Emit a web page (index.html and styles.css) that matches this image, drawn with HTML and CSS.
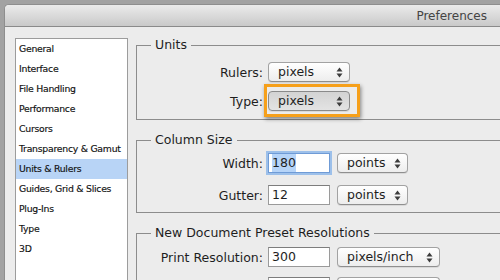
FILE: index.html
```html
<!DOCTYPE html>
<html lang="en">
<head>
    <meta charset="UTF-8">
    <title>Preferences</title>
    <link rel="stylesheet" href="styles.css">
</head>
<body>
    <div class="window">
        <!-- title bar -->
        <div class="titlebar">
            <span class="title">Preferences</span>
        </div>

        <div class="content">
            <!-- category list -->
            <ul class="nav">
                <li>General</li>
                <li>Interface</li>
                <li>File Handling</li>
                <li>Performance</li>
                <li>Cursors</li>
                <li>Transparency &amp; Gamut</li>
                <li class="active">Units &amp; Rulers</li>
                <li>Guides, Grid &amp; Slices</li>
                <li>Plug-Ins</li>
                <li>Type</li>
                <li>3D</li>
            </ul>

            <!-- settings -->
            <div class="panel">
                <fieldset class="group group-units">
                    <legend>Units</legend>
                    <div class="rows rows-units">
                        <label>Rulers:</label>
                        <span class="popup popup-units">pixels
                            <svg class="arrows" width="7" height="11" viewBox="0 0 7 11"><polygon points="0.5,4.5 3.5,0.5 6.5,4.5"/><polygon points="0.5,6.5 3.5,10.5 6.5,6.5"/></svg>
                        </span>
                        <label>Type:</label>
                        <span class="focus-frame">
                            <span class="popup popup-units pressed">pixels
                                <svg class="arrows" width="7" height="11" viewBox="0 0 7 11"><polygon points="0.5,4.5 3.5,0.5 6.5,4.5"/><polygon points="0.5,6.5 3.5,10.5 6.5,6.5"/></svg>
                            </span>
                        </span>
                    </div>
                </fieldset>

                <fieldset class="group group-column">
                    <legend>Column Size</legend>
                    <div class="rows">
                        <label>Width:</label>
                        <span class="field focused"><span class="selected">180</span></span>
                        <span class="popup popup-points">points
                            <svg class="arrows" width="7" height="11" viewBox="0 0 7 11"><polygon points="0.5,4.5 3.5,0.5 6.5,4.5"/><polygon points="0.5,6.5 3.5,10.5 6.5,6.5"/></svg>
                        </span>
                        <label>Gutter:</label>
                        <span class="field">12</span>
                        <span class="popup popup-points">points
                            <svg class="arrows" width="7" height="11" viewBox="0 0 7 11"><polygon points="0.5,4.5 3.5,0.5 6.5,4.5"/><polygon points="0.5,6.5 3.5,10.5 6.5,6.5"/></svg>
                        </span>
                    </div>
                </fieldset>

                <fieldset class="group group-preset">
                    <legend>New Document Preset Resolutions</legend>
                    <div class="rows rows-preset">
                        <label>Print Resolution:</label>
                        <span class="field">300</span>
                        <span class="popup popup-res">pixels/inch
                            <svg class="arrows" width="7" height="11" viewBox="0 0 7 11"><polygon points="0.5,4.5 3.5,0.5 6.5,4.5"/><polygon points="0.5,6.5 3.5,10.5 6.5,6.5"/></svg>
                        </span>
                        <!-- next row is only just visible at the bottom edge -->
                        <span></span>
                        <span class="field"></span>
                        <span class="popup popup-res"></span>
                    </div>
                </fieldset>
            </div>
        </div>
    </div>
</body>
</html>
```

FILE: styles.css
```css
* {
    margin: 0;
    padding: 0;
    box-sizing: border-box;
}

html, body {
    height: 280px;
    overflow: hidden;
}

body {
    font-family: 'DejaVu Sans', 'Liberation Sans', sans-serif;
    font-size: 12.5px;
    color: #1e1e1e;
    background: #a2a2a2;
    padding: 4px 0 0 4px;
}

/* window */
.window {
    height: 100%;
    background: #ececec;
    border-top: 1px solid #8e8e8e;
    border-left: 1px solid #8e8e8e;
    border-top-left-radius: 5px;
    overflow: hidden;
}

.titlebar {
    height: 22px;
    background: linear-gradient(#ebebeb, #c9c9c9);
    border-bottom: 1px solid #8a8a8a;
    display: flex;
    align-items: center;
    justify-content: flex-end;
    padding-right: 13px;
}

.title {
    font-size: 12px;
    color: #444;
}

.content {
    display: flex;
    align-items: flex-start;
    padding: 10px 0 0 10px;
}

/* category list */
.nav {
    list-style: none;
    width: 113px;
    height: 260px;
    margin-top: 1px;
    background: #fff;
    border: 1px solid #9c9c9c;
    flex-shrink: 0;
}

.nav li {
    height: 20px;
    line-height: 20px;
    padding-left: 3px;
    font-size: 9.3px;
    letter-spacing: -0.25px;
    color: #111;
    -webkit-text-stroke: 0.15px #111;
    white-space: nowrap;
}

.nav li.active {
    background: #b8d4f6;
}

/* settings panel */
.panel {
    width: 420px;
    margin-left: 8px;
    flex-shrink: 0;
}

.group {
    border: 1px solid #8c8c8c;
    border-right: none;
    padding: 0 0 8px;
}

.group + .group {
    margin-top: 12px;
}

.group legend {
    margin-left: 14px;
    padding: 0 4px;
    line-height: 16px;
}

.rows {
    display: grid;
    grid-template-columns: 126px max-content max-content;
    column-gap: 5px;
    row-gap: 12px;
    align-items: center;
}

.rows label {
    text-align: right;
    white-space: nowrap;
}

.group-units .rows {
    grid-template-columns: 126px max-content;
    padding-top: 9px;
    row-gap: 9px;
}

.group-column .rows {
    padding-top: 5px;
}

.group-column {
    padding-bottom: 7px;
}

.group-preset .rows {
    padding-top: 6px;
    row-gap: 10px;
}

/* text fields */
.field {
    display: block;
    width: 62px;
    height: 20px;
    line-height: 18px;
    padding-left: 3px;
    background: #fff;
    border: 1px solid #9a9a9a;
    border-top-color: #7d7d7d;
    margin-right: 2px;
}

.field.focused {
    border-color: #6f9bd6;
    box-shadow: 0 0 0 2px #9dc0ea;
}

.selected {
    display: inline-block;
    width: 24px;
    background: #b6d4f8;
}

/* popup buttons */
.popup {
    position: relative;
    display: block;
    height: 20px;
    line-height: 18px;
    padding-left: 9px;
    background: linear-gradient(#ffffff, #ededed);
    border: 1px solid #a2a2a2;
    border-bottom-color: #8f8f8f;
    border-radius: 4px;
    box-shadow: 0 1px 0 rgba(0, 0, 0, 0.08);
    white-space: nowrap;
}

.popup-units {
    width: 82px;
}

.popup-points {
    width: 71px;
}

.popup-res {
    width: 103px;
}

.popup.pressed {
    background: linear-gradient(#d3d3d3, #e3e3e3);
    border-color: #8a8a8a;
}

.arrows {
    position: absolute;
    right: 6px;
    top: 4px;
    fill: #3c3c3c;
}

/* highlight frame around Type popup */
.focus-frame {
    position: relative;
    display: block;
}

.focus-frame::after {
    content: "";
    position: absolute;
    left: -4px;
    right: -10px;
    top: -7px;
    bottom: -6px;
    border: 3px solid #f6a01b;
    box-shadow: 1px 2px 4px rgba(0, 0, 0, 0.45);
}
```
